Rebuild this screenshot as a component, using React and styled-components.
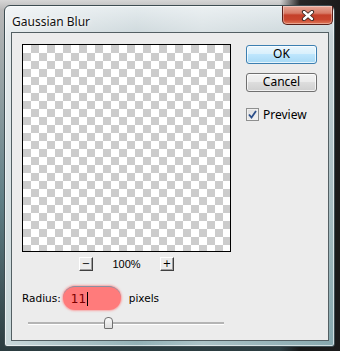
import React from "react";
import styled, { createGlobalStyle } from "styled-components";

const Global = createGlobalStyle`
  html, body { margin: 0; padding: 0; }
  body {
    width: 340px; height: 351px; overflow: hidden;
    font-family: "DejaVu Sans", "Liberation Sans", sans-serif;
  }
`;

const Desktop = styled.div`
  width: 340px;
  height: 351px;
  box-sizing: border-box;
  padding: 5px 5px 5px 4px;
  background:
    linear-gradient(90deg, rgba(0,0,0,0) 0, rgba(0,0,0,0) 280px, rgba(20,20,20,0.9) 300px, #1b1b1b 100%),
    linear-gradient(180deg, #d6d6d6 0, #b8b8b8 10px, #5f7f86 200px, #2b3c40 100%);
`;

const Window = styled.div`
  width: 331px;
  height: 342px;
  box-sizing: border-box;
  border: 1px solid #3d4d52;
  border-radius: 6px 6px 3px 3px;
  background:
    linear-gradient(90deg, rgba(255,255,255,0.55) 0, rgba(255,255,255,0.1) 40%, rgba(255,255,255,0.3) 60%, rgba(255,255,255,0) 100%),
    linear-gradient(180deg, #e3eaed 0, #c7d3d7 30px, #a7bdc2 200px, #86a8ae 100%);
  box-shadow: inset 0 0 0 1px rgba(255,255,255,0.6);
  display: flex;
  flex-direction: column;
`;

const TitleBar = styled.div`
  height: 26px;
  display: flex;
  align-items: flex-start;
  justify-content: space-between;
`;

const Title = styled.span`
  font-family: "Noto Sans", "Open Sans", sans-serif;
  font-size: 12px;
  color: #111;
  padding: 7px 0 0 7px;
  text-shadow: 0 0 6px rgba(255,255,255,0.9), 0 0 3px #fff;
`;

const CloseButton = styled.div`
  width: 51px;
  height: 19px;
  margin-right: 1px;
  box-sizing: border-box;
  border: 1px solid #5a1f18;
  border-top: none;
  border-radius: 0 0 5px 5px;
  background: linear-gradient(180deg, #e7a898 0, #d77a66 40%, #c4402a 50%, #c9452e 75%, #e07a5a 100%);
  box-shadow: inset 0 0 0 1px rgba(255,255,255,0.35);
  display: flex;
  align-items: center;
  justify-content: center;
`;

const Client = styled.div`
  flex: 1;
  margin: 0 5px 5px 6px;
  box-sizing: border-box;
  border: 1px solid #535f63;
  background: #ececec;
  padding: 11px 0 0 10px;
  display: flex;
  flex-direction: column;
`;

const TopRow = styled.div`
  display: flex;
  gap: 15px;
`;

const LeftCol = styled.div`
  display: flex;
  flex-direction: column;
  width: 209px;
`;

const Preview = styled.div`
  width: 209px;
  height: 208px;
  box-sizing: border-box;
  border: 1px solid #000;
  background-color: #fff;
  background-image: conic-gradient(#cccccc 0 25%, #fff 0 50%, #cccccc 0 75%, #fff 0);
  background-size: 16px 16px;
  background-position: 0 0;
`;

const ZoomRow = styled.div`
  display: flex;
  align-items: center;
  margin: 5px 0 0 57px;
`;

const SmallBtn = styled.div`
  width: 14px;
  height: 14px;
  box-sizing: border-box;
  border: 1px solid;
  border-color: #fff #404040 #404040 #fff;
  background: #ececec;
  box-shadow: inset -1px -1px 0 #a0a0a0;
  font-family: "DejaVu Sans", sans-serif;
  font-size: 10px;
  line-height: 11px;
  text-align: center;
  color: #000;
`;

const ZoomLabel = styled.span`
  width: 67px;
  text-align: center;
  font-family: "Liberation Sans", sans-serif;
  font-size: 11px;
  color: #000;
`;

const RightCol = styled.div`
  display: flex;
  flex-direction: column;
  padding-top: 1px;
`;

const Button = styled.div`
  width: 71px;
  height: 19px;
  box-sizing: border-box;
  border: 1px solid ${(p) => (p.$default ? "#3c7fb1" : "#707070")};
  border-radius: 3px;
  margin-top: ${(p) => p.$mt || 0}px;
  background: ${(p) =>
    p.$default
      ? "linear-gradient(180deg, #eaf6fd 0, #d9f0fc 45%, #bee6fd 50%, #a7d9f5 100%)"
      : "linear-gradient(180deg, #f2f2f2 0, #ebebeb 45%, #dddddd 50%, #cfcfcf 100%)"};
  box-shadow: inset 0 0 0 1px rgba(255,255,255,0.7);
  font-family: "Noto Sans", "Open Sans", sans-serif;
  font-size: 12px;
  line-height: 16px;
  text-align: center;
  color: #000;
`;

const CheckRow = styled.div`
  display: flex;
  align-items: center;
  gap: 4px;
  margin-top: 14px;
  font-family: "Noto Sans", "Open Sans", sans-serif;
  font-size: 12px;
  color: #000;
`;

const CheckBox = styled.div`
  width: 13px;
  height: 13px;
  box-sizing: border-box;
  border: 1px solid #8e8f8f;
  background: linear-gradient(135deg, #dcdcdc 0, #f4f4f4 100%);
  box-shadow: inset 0 0 0 1px #f0f0f0;
  display: flex;
  align-items: center;
  justify-content: center;
`;

const RadiusRow = styled.div`
  display: flex;
  align-items: center;
  margin-top: 15px;
  height: 24px;
  font-family: "DejaVu Sans", sans-serif;
  font-size: 10.5px;
  color: #000;
`;

const Field = styled.div`
  width: 58px;
  height: 24px;
  margin: 0 8px 0 2px;
  box-sizing: border-box;
  border-radius: 12px;
  background: #ff7b7b;
  box-shadow: 0 0 2px 1px rgba(255,120,120,0.6);
  border-top: 1px solid #8a8fa0;
  padding-left: 8px;
  display: flex;
  align-items: center;
  color: #7a0000;
  font-family: "DejaVu Sans", sans-serif;
  font-size: 12px;
`;

const Caret = styled.span`
  display: inline-block;
  width: 1px;
  height: 14px;
  background: #000;
  margin-left: 1px;
`;

const SliderRow = styled.div`
  position: relative;
  margin: 7px 0 0 6px;
  width: 196px;
  height: 13px;
`;

const Track = styled.div`
  position: absolute;
  left: 0;
  right: 0;
  top: 5px;
  height: 2px;
  background: #b4b4b4;
  border-bottom: 1px solid #fff;
`;

const Thumb = styled.div`
  position: absolute;
  top: 0;
  width: 9px;
  height: 12px;
  box-sizing: border-box;
  border: 1px solid #707070;
  border-radius: 4px 4px 1px 1px;
  background: linear-gradient(180deg, #fafafa 0, #dcdcdc 100%);
`;

export default function App() {
  return (
    <>
      <Global />
      <Desktop>
        <Window>
          <TitleBar>
            <Title>Gaussian Blur</Title>
            <CloseButton>
              <svg width="14" height="11" viewBox="0 0 14 11">
                <path d="M3 2 L11 9 M11 2 L3 9" stroke="#3a2520" strokeWidth="4.2" strokeLinecap="round" fill="none" />
                <path d="M3 2 L11 9 M11 2 L3 9" stroke="#fff" strokeWidth="2.4" strokeLinecap="round" fill="none" />
              </svg>
            </CloseButton>
          </TitleBar>
          <Client>
            <TopRow>
              <LeftCol>
                <Preview />
                <ZoomRow>
                  <SmallBtn>−</SmallBtn>
                  <ZoomLabel>100%</ZoomLabel>
                  <SmallBtn>+</SmallBtn>
                </ZoomRow>
              </LeftCol>
              <RightCol>
                <Button $default>OK</Button>
                <Button $mt={9}>Cancel</Button>
                <CheckRow>
                  <CheckBox>
                    <svg width="9" height="9" viewBox="0 0 9 9">
                      <path d="M1 4.5 L3.5 7.5 L8 1" stroke="#2c4f8a" strokeWidth="1.8" fill="none" />
                    </svg>
                  </CheckBox>
                  Preview
                </CheckRow>
              </RightCol>
            </TopRow>
            <RadiusRow>
              Radius:
              <Field>
                11<Caret />
              </Field>
              pixels
            </RadiusRow>
            <SliderRow>
              <Track />
              <Thumb style={{ left: "76px" }} />
            </SliderRow>
          </Client>
        </Window>
      </Desktop>
    </>
  );
}
